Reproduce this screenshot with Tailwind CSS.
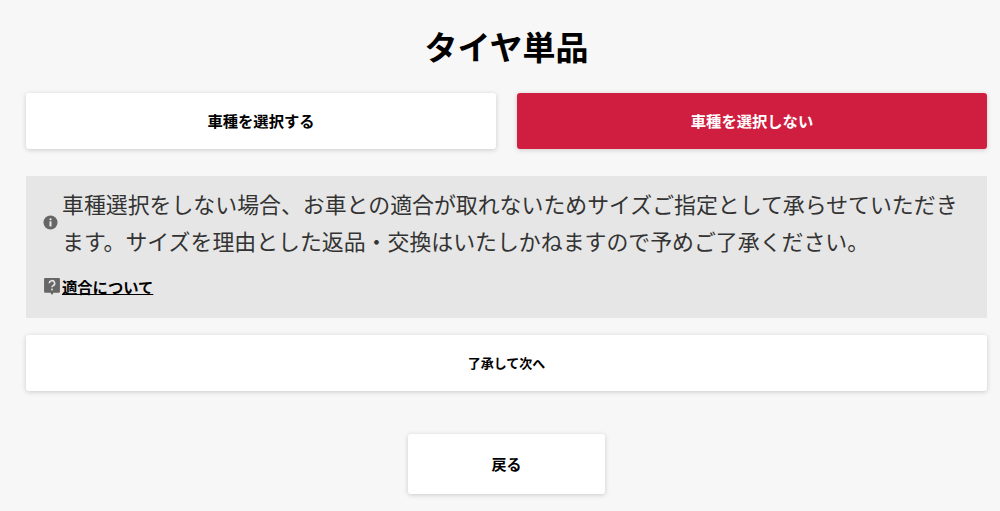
<!DOCTYPE html>
<html lang="ja">

<head>
    <meta charset="UTF-8">
    <meta name="viewport" content="width=device-width, initial-scale=1.0">
    <script src="https://cdn.jsdelivr.net/npm/@tailwindcss/browser@4"></script>
    <title>タイヤ単品</title>
</head>

<body class="bg-[#f7f7f7] h-[511px] overflow-hidden font-['Noto_Sans_CJK_JP','Noto_Sans',sans-serif] text-black">
    <main class="pl-[26px] pr-[13px] pt-[24px]">
        <h1 class="text-center text-[33px] leading-[45px] font-bold">タイヤ単品</h1>

        <div class="mt-[24px] flex gap-[21px]">
            <button class="flex-1 h-[56px] pb-[2px] rounded-[3px] bg-white text-[15.3px] font-bold shadow-[0_1px_5px_rgba(0,0,0,0.18)]">車種を選択する</button>
            <button class="flex-1 h-[56px] pb-[2px] rounded-[3px] bg-[#cf1e3f] text-white text-[15.3px] font-bold shadow-[0_1px_5px_rgba(0,0,0,0.18)]">車種を選択しない</button>
        </div>

        <section class="mt-[27px] h-[142px] bg-[#e6e6e6] pl-[17px] pr-[20px] pt-[9px]">
            <div class="flex items-center gap-[4px]">
                <svg class="w-[15px] h-[15px] shrink-0" viewBox="0 0 16 16">
                    <circle cx="8" cy="8" r="7.5" fill="#666"/>
                    <circle cx="8" cy="4.6" r="1.2" fill="#e6e6e6"/>
                    <rect x="6.9" y="6.8" width="2.2" height="5.4" fill="#e6e6e6"/>
                </svg>
                <p class="text-[21.9px] leading-[37px] text-[#333]">車種選択をしない場合、お車との適合が取れないためサイズご指定として承らせていただきます。サイズを理由とした返品・交換はいたしかねますので予めご了承ください。</p>
            </div>
            <div class="mt-[15px] flex items-center gap-[1px]">
                <svg class="w-[18px] h-[19px] shrink-0" viewBox="0 0 17 18">
                    <path d="M2 1h13a1 1 0 0 1 1 1v12a1 1 0 0 1-1 1h-5l-1.5 2-1.5-2H2a1 1 0 0 1-1-1V2a1 1 0 0 1 1-1z" fill="#666"/>
                    <path d="M6 6a2.5 2.5 0 1 1 3.6 2.2c-.7.4-1.1.8-1.1 1.6" fill="none" stroke="#e6e6e6" stroke-width="1.5"/>
                    <rect x="7.7" y="11" width="1.6" height="1.6" fill="#e6e6e6"/>
                </svg>
                <a href="#" class="text-[15.3px] leading-[24px] font-bold underline">適合について</a>
            </div>
        </section>

        <button class="mt-[17px] block w-full h-[56px] rounded-[3px] bg-white text-[13px] font-bold shadow-[0_1px_5px_rgba(0,0,0,0.18)]">了承して次へ</button>

        <div class="mt-[43px] flex justify-center">
            <button class="w-[197px] h-[60px] rounded-[3px] bg-white text-[15px] font-bold shadow-[0_1px_5px_rgba(0,0,0,0.18)]">戻る</button>
        </div>
    </main>
</body>

</html>
